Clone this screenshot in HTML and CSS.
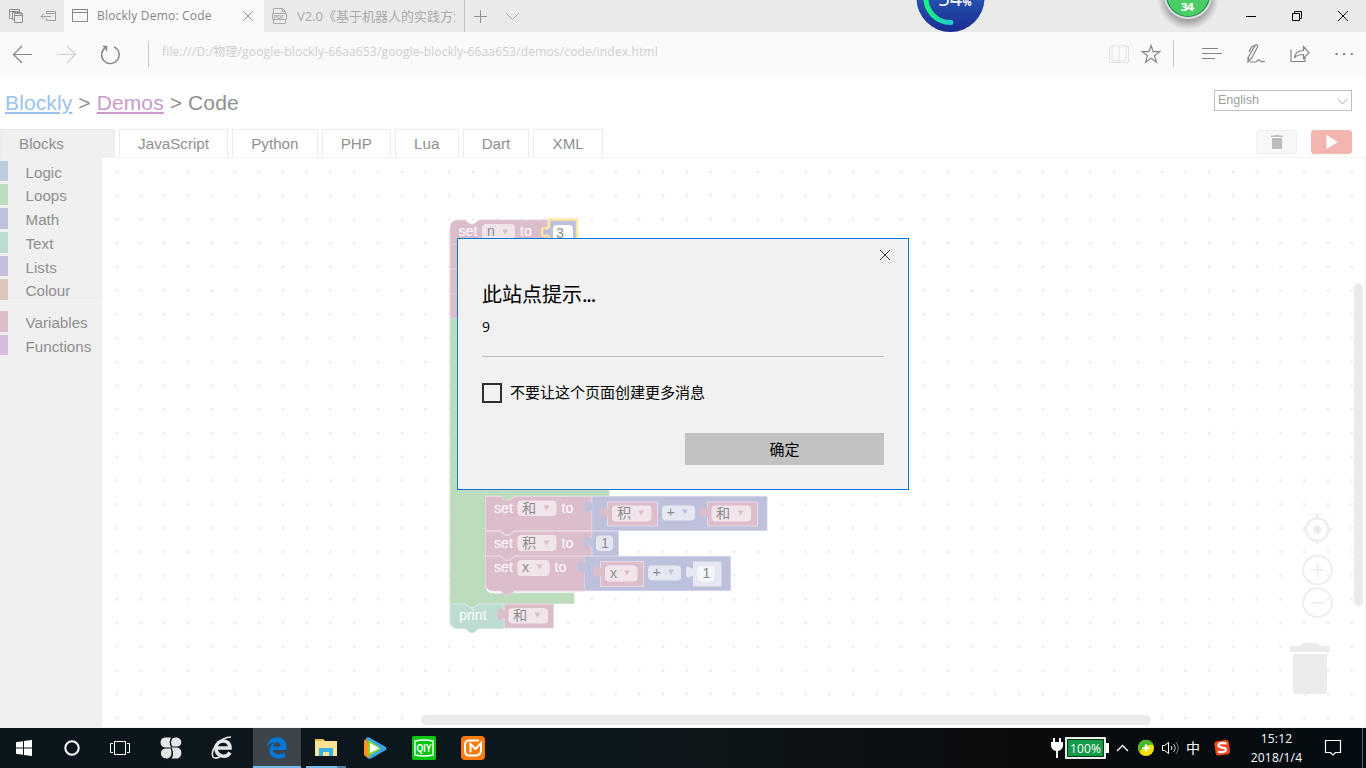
FILE: index.html
```html
<!DOCTYPE html>
<html lang="zh-CN">
<head>
<meta charset="utf-8">
<title>Blockly Demo: Code</title>
<link rel="stylesheet" href="styles.css">
</head>
<body>
<div class="screen">
  <header class="tabbar">
    <div class="tab-tools">
      <svg width="64" height="32" fill="none" stroke="#929292"><path d="M9.500 18.500v-9h10v2M9.500 11.500h10M9.500 18.500h3M12.500 19.500v-7h9v2M14.500 22.500v-9h8v9zM14.500 15.500h8M12.500 19.500h2"/><path d="M46.500 14v-2.500h9v9h-9V18M46.500 13.500h9M41 16.500h10M44 13.500l-3 3 3 3" stroke="#a0a0a0"/></svg>
    </div>
    <div class="tab tab-on">
      <svg width="16" height="14" fill="none" stroke="#858585"><path d="M.5.5h15v12H.5zM.5 3.500h15"/></svg>
      <span class="tab-name">Blockly Demo: Code</span>
      <svg width="10" height="10" stroke="#999"><path d="M0 0l10 10M10 0L0 10"/></svg>
    </div>
    <div class="tab tab-off">
      <svg width="16" height="16" fill="none" stroke="#aaa"><path d="M1.500 5V.5h9l3 3V5M10.500.5v3h3M1.500 12v3.500h12V12M.5 5.500h14v6H.5z"/><text x="1.800" y="10.600" class="pdf">PDF</text></svg>
      <span class="tab-name">V2.0《基于机器人的实践方法</span>
    </div>
    <svg class="tab-add" width="70" height="32" fill="none" stroke="#929292"><path d="M9 16.500h13M15.500 10v13"/><path d="M41 13l6.500 6.500L54 13" stroke="#aaa"/></svg>
    <svg class="win-btns" width="120" height="32" fill="none" stroke="#000"><path d="M0 16.500h10M46.500 13.500h7v7h-7zM48.500 13.500v-2h7v7h-2M92 11l10 10M102 11l-10 10"/></svg>
    <svg class="orbs" width="320" height="40">
      <defs>
        <linearGradient id="blue" x2="0" y2="1"><stop offset=".5" stop-color="#2753b0"/><stop offset="1" stop-color="#192b91"/></linearGradient>
        <linearGradient id="ring" x2="1"><stop stop-color="#13f47d"/><stop offset="1" stop-color="#20c8cf"/></linearGradient>
        <radialGradient id="shade"><stop offset=".7" stop-color="#888" stop-opacity=".7"/><stop offset="1" stop-color="#999" stop-opacity="0"/></radialGradient>
      </defs>
      <circle cx="40.500" cy="-2" r="34" fill="url(#blue)"/>
      <path d="M16 -2a24.500 24.500 0 0 0 25 24.500" fill="none" stroke="url(#ring)" stroke-width="5" stroke-linecap="round"/>
      <text x="28" y="6" class="orb-big" textLength="24">54</text><text x="52.500" y="6" class="orb-pct">%</text>
      <circle cx="278" cy="-1" r="31" fill="url(#shade)"/>
      <circle cx="278" cy="-5" r="24" fill="#ddd"/><circle cx="278" cy="-5" r="22" fill="#16854a"/><circle cx="278" cy="-5" r="21" fill="#48ce65"/>
      <text x="270.500" y="11" class="orb-small" textLength="14">34</text>
    </svg>
  </header>

  <nav class="navbar">
    <svg width="150" height="44" fill="none" stroke="#858585" stroke-width="1.200"><path d="M13.500 22.500H32M22 14l-8.500 8.500L22 31"/><path d="M57 22.500h18.500M67 14l8.500 8.500L67 31" stroke="#cfcfcf"/><path d="M114 14.800a8.800 8.800 0 1 1-8.200.5M103 14.500h3.500v4.500" stroke-width="1.400"/><path d="M148.500 9v26" stroke="#c8c8c8" stroke-width="1"/></svg>
    <span class="url">file:///D:/物理/google-blockly-66aa653/google-blockly-66aa653/demos/code/index.html</span>
    <svg class="nav-right" width="266" height="44" fill="none" stroke="#858585" stroke-width="1.200">
      <path d="M13 14.500H9.500v16h9l.5.500.5-.5h9v-16H25M19 29.500v-15q-3-2-7-.5v15q4-1 7 .5 3-1.500 7-.5v-15q-4-1.500-7 .5" stroke="#e2e2e2" stroke-width="1"/>
      <path d="M51 13.500l2.200 6.200h6.500l-5.200 4 2 6.600-5.500-4-5.500 4 2-6.600-5.200-4h6.500z"/>
      <path d="M73.500 9v26" stroke="#c8c8c8" stroke-width="1"/>
      <path d="M102 16.500h16M102 21.500h20M102 26.500h13"/>
      <path d="M148 30l1-6 6.500-11q3-1 2 2l-6 11.500-3.500 3.500V25M155.500 13l-4 2-2.500 5M150 30h6c3-4 4-1 5-.5s2 0 4-.5"/>
      <path d="M191 17.500v12h14v-4M194.500 26c.5-5 4-7.500 9-7.500v-4l5.500 6-5.500 6v-4c-4 0-7 .5-9 3.500z"/>
      <path d="M235.500 22h2.200M243 22h2.200M250.700 22h2.200" stroke-width="2.200"/>
    </svg>
  </nav>

  <main class="page">
    <div class="heading">
      <h1><a class="lnk">Blockly</a> &gt; <a class="lnk seen">Demos</a> &gt; Code</h1>
      <div class="select"><span>English</span><svg width="11" height="7" fill="none" stroke="#aaa"><path d="M.5.800l5 5 5-5"/></svg></div>
    </div>
    <div class="tabs">
      <div class="t on">Blocks</div><div class="t">JavaScript</div><div class="t">Python</div><div class="t">PHP</div><div class="t">Lua</div><div class="t">Dart</div><div class="t">XML</div>
      <div class="actions">
        <div class="btn"><svg width="12" height="14" fill="#bcbcbc"><path d="M0 .5h4V0h4v.5h4V2H0zM1 3h10v11H1z"/></svg></div>
        <div class="btn run"><svg width="12" height="14" fill="#fff"><path d="M.5 0L12 7 .5 14z"/></svg></div>
      </div>
    </div>
    <div class="work">
      <div class="toolbox">
        <div class="cat logic">Logic</div><div class="cat loops">Loops</div><div class="cat math">Math</div><div class="cat text">Text</div><div class="cat lists">Lists</div><div class="cat colour">Colour</div>
        <div class="sep"></div>
        <div class="cat vars">Variables</div><div class="cat funcs">Functions</div>
      </div>
      <svg class="canvas" width="1264" height="571" viewBox="102 157 1264 571">
        <defs>
          <pattern id="grid" patternUnits="userSpaceOnUse" x="104.800" y="159.800" width="23.750" height="23.750"><path d="M10.500 12h3M12 10.500v3" stroke="#ebebeb" stroke-width="1.300"/></pattern>
          <path id="plug" d="M.5 3.500H0c0 9-7.500-6.500-7.500 6.500s7.500-2 7.500 6.500h.5z"/>
        </defs>
        <rect x="102" y="157" width="1264" height="571" fill="url(#grid)"/>
        <path d="M102 157.500h1264M102 727.500h1264M1365.500 157v571" stroke="#f3f3f3"/>

        <!-- first statement stack -->
        <g stroke="#e8d3dc">
          <path class="p" d="M450 318.500V228q0-8 8-8h7l5 4h4l5-4h69v98.500z"/>
          <path d="M450 244.500h30M450 269h30M450 293.500h30"/>
        </g>
        <text class="w" x="458.500" y="236">set</text><rect class="f" x="482" y="224" width="33" height="16" rx="4"/><text class="d" x="487" y="236">n</text><path class="ap" d="M502 229.500h6l-3 5z"/><text class="w" x="520" y="236">to</text>
        <path d="M549 219.500h28V245h-28v-8c-2-4-7 3-7-5s5-1 7-5z" fill="#bdc1dc" stroke="#ffe6a3" stroke-width="2.500"/>
        <rect x="553" y="225" width="20" height="18" rx="4" fill="#fff"/><text class="d" x="556" y="238">3</text>

        <!-- loop body -->
        <g class="g" stroke="#cce4cc">
          <path d="M450 318.500h36V585q0 8 8 8h80v10.500H479l-5 4h-4l-5-4h-15z"/>
          <path d="M486 480h123v16h-95l-5 4.500h-4l-5-4.500h-14z"/>
        </g>
        <path d="M486 584q0 8.300 8 8.300h8" fill="none" stroke="#fff" stroke-width="2"/>
        <g stroke="#e7d5de">
          <path class="p" d="M485.500 556.500h15l5 4h4l5-4h70v34.500h-70l-5 4h-4l-5-4h-7q-8 0-8-8z"/>
          <path class="p" d="M485.500 531.500h15l5 4h4l5-4h77v24.500h-77l-5 4h-4l-5-4h-15z"/>
          <path class="p" d="M485.500 496.500h15l5 4h4l5-4h77v34h-77l-5 4h-4l-5-4h-15z"/>
        </g>
        <g class="b" stroke="#d0d3e7"><path d="M592 496.500h175v34H592zM592 531.500h26.500v24.500H592zM584.500 556.500h146v34h-146z"/></g>
        <g class="b"><use href="#plug" x="592" y="497"/><use href="#plug" x="592" y="532"/><use href="#plug" x="585" y="557"/></g>
        <g class="p" stroke="#e7d9e6"><path d="M607.500 502h50v24h-50zM707.500 502h50v24h-50zM600.500 561.500h43v25h-43z"/></g>
        <g class="p"><use href="#plug" x="608" y="502"/><use href="#plug" x="708" y="502"/><use href="#plug" x="601" y="562"/></g>
        <g fill="#e5e7f2"><path d="M693 561.500h28.500v25H693z"/><use href="#plug" x="693.500" y="562"/></g>

        <g class="w"><text x="494" y="513">set</text><text x="561.500" y="513">to</text><text x="494" y="548">set</text><text x="561.500" y="548">to</text><text x="494" y="572">set</text><text x="554.500" y="572">to</text></g>
        <g class="f"><rect x="517.500" y="500.500" width="39" height="15.500" rx="4"/><rect x="517.500" y="535" width="39" height="16" rx="4"/><rect x="517.500" y="560" width="32" height="16" rx="4"/><rect x="612" y="505.500" width="39.500" height="16" rx="4"/><rect x="711.500" y="505.500" width="39.500" height="16" rx="4"/><rect x="605" y="565.500" width="32.500" height="16" rx="4"/></g>
        <g class="fb"><rect x="662" y="505.500" width="33" height="15" rx="4"/><rect x="648" y="565.500" width="33" height="15" rx="4"/><rect x="596" y="535.500" width="17" height="15.500" rx="4"/></g>
        <rect x="697.500" y="566" width="17" height="15.500" rx="4" fill="#f5f6fa"/>
        <g class="d"><text x="522" y="513">和</text><text x="522" y="548">积</text><text x="522" y="572">x</text><text x="617" y="518">积</text><text x="716" y="518">和</text><text x="610" y="578">x</text><text x="666.500" y="517">+</text><text x="652.500" y="577">+</text><text x="601" y="548">1</text><text x="702.500" y="578">1</text></g>
        <path class="ap" d="M543.500 505.500h6l-3 5zM543.500 540.500h6l-3 5zM536.500 564.500h6l-3 5zM638 510.500h6l-3 5zM737.500 510.500h6l-3 5zM624 570.500h6l-3 5z"/>
        <path class="ab" d="M682 509.500h6l-3 5zM668 569.500h6l-3 5z"/>

        <!-- print statement -->
        <path fill="#bddcd2" stroke="#d0e7df" d="M450 604h15l5 4h4l5-4h25v24.500h-25l-5 4h-4l-5-4h-7q-8 0-8-8z"/>
        <path class="p" stroke="#e7d5de" d="M504.500 604h49v24h-49z"/><use class="p" href="#plug" x="505" y="604"/>
        <text class="w" x="459" y="620">print</text><rect class="f" x="508.500" y="608" width="39.500" height="15.500" rx="4"/><text class="d" x="513" y="620">和</text><path class="ap" d="M534.500 612.500h6l-3 5z"/>

        <!-- workspace controls -->
        <g fill="none" stroke="#ebebeb" stroke-width="1.600"><circle cx="1317.200" cy="529.500" r="11.200" stroke-width="2"/><path d="M1317.200 514v4M1317.200 541v3M1303 529.500h3M1329 529.500h3.500" stroke-width="2"/><path d="M1308 514.500h25" stroke-width=".5"/><circle cx="1317.600" cy="570" r="14.400"/><circle cx="1317.600" cy="602.500" r="14.400"/><path d="M1311 570h13.500M1317.700 563v13.500M1311 602.700h14"/></g>
        <g fill="#ebebeb"><circle cx="1317.200" cy="529.500" r="4.200"/><path d="M1290 646h10l3-3h14l3 3h10v6h-40zM1293 654h34v37q0 3-3 3h-28q-3 0-3-3z"/><rect x="1354" y="283" width="9" height="323" rx="4.500"/><rect x="421" y="715" width="730" height="10" rx="5"/></g>
      </svg>
    </div>
  </main>

  <footer class="taskbar">
    <div class="apps">
      <div class="app"><svg width="16" height="16" fill="#fff"><path d="M0 2.200l7-1v6.300H0zM8 1l8-1.100v7.600H8zM0 8.500h7v6.300l-7-1zM8 8.500h8V16l-8-1z"/></svg></div>
      <div class="app"><svg width="16" height="16"><circle cx="8" cy="8" r="6.700" fill="none" stroke="#fff" stroke-width="2"/></svg></div>
      <div class="app"><svg width="20" height="14" fill="none" stroke="#fff"><path d="M4.500.5h11v13h-11zM3 2.500H.5v9H3M17 2.500h2.500v9H17"/></svg></div>
      <div class="app hub"><svg width="22" height="22" fill="#e3e5e6"><path d="M11.200 10.500H5C-1 10-1 .5 5.500.5H11c-1.500 3-2 6 .2 10zM12.200 9.500C10 5 11 .5 16 .5c7 0 7 9 1 9zM11.500 10.500H17c6 .5 6 11-1 11h-4.500c2-3 2-7 0-11zM10.500 11.500c2 4 1 10-4 10-7 0-7.500-9.500-1-10z"/></svg></div>
      <div class="app ie"><svg width="22" height="24"><path d="M19 16.500c-4 6.500-14 4-14-4.500S19 2 19 12H6" fill="none" stroke="#e4e7e8" stroke-width="3.600"/><path d="M2 21C-1 14 9 1 20 1M2 21c2 2 5 1 8-1" fill="none" stroke="#e4e7e8" stroke-width="1.600"/></svg></div>
      <div class="app current"><svg width="22" height="22" fill="#0078d7"><path fill-rule="evenodd" d="M.8 9.800C2 3.500 6 .3 11 .3c6 0 9.500 4 9.500 10V13H7c.2 5 7.500 5.500 12 2.500V20c-6 3.300-15.500 1.600-15.500-6.500C3.500 9 6 6.500 9 5.500 5 5.500 2.500 7 .8 9.800zM7.200 9.500h7.300c0-5.500-6.500-5-7.300 0z"/></svg></div>
      <div class="app more opened"><svg width="22" height="20"><path d="M0 1h8l2 2h12v15H0z" fill="#ffe394"/><path d="M0 1h8v2H0z" fill="#eebd3c"/><path d="M4 10h14v8h-4v-4H8v4H4z" fill="#37b1e4"/></svg></div>
      <div class="app more"><svg width="25" height="22"><path d="M3 1q2-1.500 5 .5l14 8q3 2 0 4L8 21.500q-3 1-4-1z" fill="#35a8f0"/><path d="M1 5Q1 2 4 2l3 18q-5 1-6-3z" fill="#ff9418"/><path d="M5 4q1-1 3 .5l9 6q1 1 0 2L8 18q-3 1-3-1z" fill="#8ad72b"/><path d="M7 6l9 5.200L7 16z" fill="#fff"/></svg></div>
      <div class="app more"><svg width="24" height="24"><rect width="24" height="24" rx="2" fill="#08c512"/><path d="M3 5q9-2 18 0v14q-9 2-18 0z" fill="none" stroke="#fff" stroke-width="1.400"/><text x="4.500" y="16" class="qiy" textLength="15" lengthAdjust="spacingAndGlyphs">QIY</text></svg></div>
      <div class="app more"><svg width="24" height="24"><rect width="24" height="24" rx="4" fill="#ff7b0d"/><path d="M18 4.500H8.500Q4 4.500 4 9v6q0 4.500 4.500 4.500H14q6 0 6-5V7L14.500 13 9.500 8v8.500" fill="none" stroke="#fff" stroke-width="2"/></svg></div>
    </div>
    <div class="tray">
      <svg width="190" height="40">
        <path d="M4 10v5M10 10v5M7 22v8" stroke="#fff" stroke-width="2"/><path d="M1 14h12v3q0 5-5 6H6q-5-1-5-6z" fill="#fff"/>
        <rect x="16" y="10" width="39" height="20" fill="#159a4a" stroke="#fff" stroke-width="1.800"/><path d="M17.500 11.500h36v17h-36z" fill="none" stroke="#07351a"/><path d="M56 15h3v10h-3z" fill="#fff"/><text x="20" y="24.500" class="bat" textLength="31">100%</text>
        <path d="M67 23l5.500-5.500L78 23" fill="none" stroke="#fff" stroke-width="1.300"/>
        <circle cx="96" cy="20" r="8" fill="#f4e008"/><path d="M88.500 17a8 8 0 0 1 15 0q-8-2-14 7-2-3-1-7z" fill="#4ab52c"/><path d="M92.500 20h7M96 16.500v7" stroke="#fff" stroke-width="2.200"/>
        <g fill="none" stroke="#fff"><path d="M112.500 17.500h2l4-3v11l-4-3h-2zM121 18q2 2 0 4"/><path d="M123.500 16q3.500 4 0 8" stroke="#bbb"/><path d="M126 14q4.500 6 0 12" stroke="#777"/></g>
        <text x="136" y="24.500" class="ime">中</text>
        <rect x="165" y="12.500" width="14.500" height="14.500" rx="3" fill="#f0491d" transform="rotate(-8 172 20)"/><path d="M176.500 15.500c-4-1-8-.5-8 2 0 3 8 1 7.500 4.500-.5 2.200-4.500 2.500-8 1.500" fill="none" stroke="#fff" stroke-width="2.300"/>
      </svg>
      <div class="clock"><span>15:12</span><span>2018/1/4</span></div>
      <svg width="50" height="40" fill="none" stroke="#fff" stroke-width="1.200"><path d="M9.500 12.500h15v12h-5L17 27l-2.500-2.500h-5z"/><path d="M46.500 0v40" stroke="#59636a" stroke-width="1"/></svg>
    </div>
  </footer>

  <div class="dialog" role="dialog">
    <svg class="dlg-x" width="10" height="10" stroke="#333"><path d="M0 0l10 10M10 0L0 10"/></svg>
    <div class="dlg-title">此站点提示<span class="dots">...</span></div>
    <div class="dlg-msg">9</div>
    <div class="dlg-check"><span class="box"></span><span class="dlg-label">不要让这个页面创建更多消息</span></div>
    <div class="dlg-ok">确定</div>
  </div>
</div>
</body>
</html>
```
FILE: styles.css
```css
* { box-sizing: border-box; }
body { margin: 0; font-family: "Liberation Sans", "Noto Sans CJK SC", sans-serif; }
svg { display: block; flex: none; }
.screen { position: relative; width: 1366px; height: 768px; overflow: hidden; display: flex; flex-direction: column; background: #fff; }

.tabbar { position: relative; height: 32px; flex: none; display: flex; background: #eaeaea; font: 12px/32px "Open Sans", "Noto Sans CJK SC", sans-serif; }
.tab-tools { width: 64px; }
.tab { display: flex; align-items: center; white-space: nowrap; }
.tab-on { width: 200px; padding: 0 11px 0 8px; background: #fafafa; color: #858585; }
.tab-on .tab-name { margin-left: 9px; flex: 1; letter-spacing: .2px; }
.tab-off { width: 201px; padding-left: 8px; border-right: 1px solid #bebebe; color: #aaa; }
.tab-off .tab-name { margin-left: 9px; width: 158px; overflow: hidden; font-size: 13px; }
.pdf { font: bold 5px "Liberation Sans", sans-serif; fill: #aaa; stroke: none; }
.win-btns { margin-left: auto; }
.orbs { position: absolute; left: 910px; top: 0; }
.orb-big { font: 21px "Open Sans", sans-serif; fill: #fff; }
.orb-pct { font: bold 10px "Open Sans", sans-serif; fill: #fff; }
.orb-small { font: bold 11px "DejaVu Sans", sans-serif; fill: #fff; }

.navbar { height: 44px; flex: none; display: flex; background: #fafafa; }
.url { margin-left: 12px; font: 12px/39px "Open Sans", "Noto Sans CJK SC", sans-serif; letter-spacing: .160px; color: #cfcfcf; white-space: nowrap; }
.nav-right { margin-left: auto; }

.page { flex: none; height: 652px; display: flex; flex-direction: column; color: #8f8f8f; }
.heading { height: 53px; display: flex; justify-content: space-between; padding: 14px 14px 0 5px; }
.heading h1 { margin: 0; font-size: 21px; letter-spacing: .120px; line-height: 26px; font-weight: 400; }
.lnk { color: #99c3ec; text-decoration: underline; text-decoration-thickness: 2px; text-underline-offset: 2px; }
.seen { color: #cc99cc; }
.select { width: 138px; height: 21px; display: flex; justify-content: space-between; padding: 0 3px; border: 1px solid #bfbfbf; font-size: 12.500px; line-height: 18px; color: #a0a0a0; }
.select svg { margin-top: 7px; }
.tabs { height: 28px; display: flex; gap: 4px; font-size: 15.200px; line-height: 27px; }
.t { height: 28px; padding: 0 18.100px; border: 1px solid #ebebeb; border-bottom: 0; }
.on { width: 115px; background: #f0f0f0; }
.actions { margin-left: auto; display: flex; gap: 14px; padding: 1px 14px 0 0; }
.btn { width: 41px; height: 24px; display: flex; align-items: center; justify-content: center; border: 1px solid #f0f0f0; border-radius: 3px; background: #f8f8f8; }
.run { background: #f3b5af; border-color: #f3b5af; }
.work { display: flex; height: 571px; }
.toolbox { width: 102px; padding-top: 3.600px; background: #f0f0f0; font-size: 15.200px; }
.cat { height: 20.750px; margin-bottom: 3px; padding-left: 17.500px; border-left: 8px solid; line-height: 24.800px; }
.sep { height: 1px; margin: 2px 0 6.800px 8px; background: #f7f7f7; }
.logic { border-color: #bdccdc; }
.loops { border-color: #bddcbd; }
.math { border-color: #bdc1dc; }
.text { border-color: #bddcd2; }
.lists { border-color: #c7bddc; }
.colour { border-color: #dcc7bd; }
.vars { border-color: #dcbdcc; }
.funcs { border-color: #d6bddc; }

.canvas { font-size: 14.200px; }
.p { fill: #dcbdcc; }
.g { fill: #bddcbd; }
.b { fill: #bdc1dc; }
.w { fill: #fff; }
.d { fill: #8b8b8b; }
.f { fill: #f1e5eb; }
.fb { fill: #e5e7f2; }
.ap { fill: #dcbdcc; }
.ab { fill: #bdc1dc; }

.taskbar { height: 40px; flex: none; display: flex; justify-content: space-between; background: linear-gradient(90deg, #0b161c, #0d171b 50%, #0b0b0d 75%, #030d12); }
.apps { display: flex; }
.app { width: 48px; height: 40px; display: flex; align-items: center; justify-content: center; }
.hub { margin-left: 3px; }
.ie { margin-left: 3px; }
.current { margin-left: 7px; background: #3d454a; border-bottom: 2px solid #76b9ed; padding-top: 2px; }
.more { margin-left: 1px; }
.opened { background: linear-gradient(90deg, #76b9ed 31px, #527fa5 31px) 4px 38px / 40px 2px no-repeat; }
.tray { display: flex; }
.bat { font: 12px "Open Sans", sans-serif; fill: #fff; }
.ime { font: 14px "Noto Sans CJK SC", sans-serif; fill: #fff; }
.qiy { font: bold 11px "Liberation Sans", sans-serif; fill: #fff; }
.clock { width: 76px; display: flex; flex-direction: column; align-items: center; padding: 1px 3px 0 0; font: 12px/19px "Open Sans", sans-serif; letter-spacing: .200px; color: #fff; }

.dialog { position: absolute; left: 457px; top: 238px; width: 452px; height: 252px; padding: 39px 24px 0; border: 1px solid #0078d7; background: #f1f1f1; color: #000; font: 15px "Open Sans", "Noto Sans CJK SC", sans-serif; }
.dlg-x { position: absolute; right: 18px; top: 11px; }
.dlg-title { font: 20px/31px "Noto Sans CJK SC", sans-serif; }
.dots { letter-spacing: -1.200px; }
.dlg-msg { height: 48px; font-size: 14px; line-height: 35px; border-bottom: 1px solid #bfbfbf; }
.dlg-check { display: flex; align-items: center; height: 22px; margin-top: 25px; }
.dlg-label { line-height: 20px; padding-bottom: 3px; }
.box { width: 20px; height: 20px; margin-right: 8px; border: 2px solid #2e2e2e; }
.dlg-ok { width: 199px; height: 32px; margin: 29px 0 0 auto; background: #c2c2c2; text-align: center; line-height: 32px; }
```
